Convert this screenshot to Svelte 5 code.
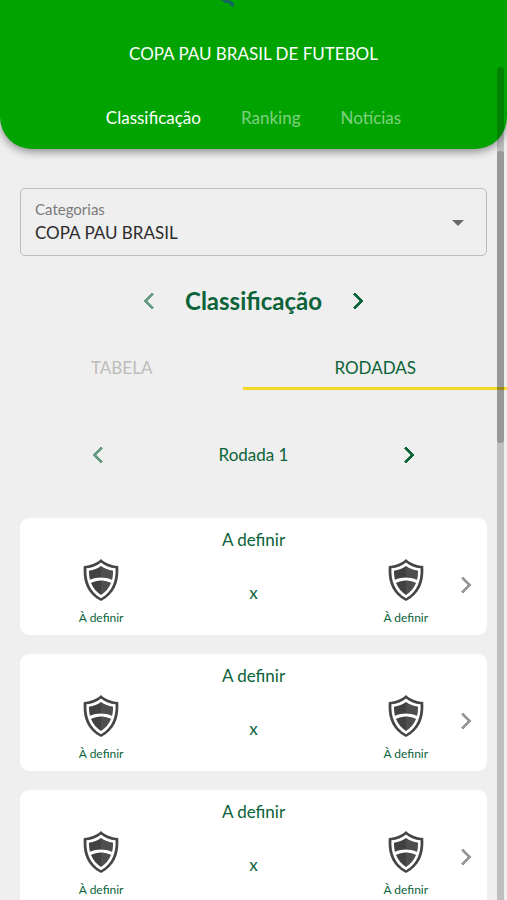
<script lang="ts">
  interface Match {
    title: string;
    home: string;
    away: string;
  }

  const sections = ['Classificação', 'Ranking', 'Notícias'];
  const views = ['TABELA', 'RODADAS'];
  const categories = ['COPA PAU BRASIL'];
  const matches: Match[] = [
    { title: 'A definir', home: 'À definir', away: 'À definir' },
    { title: 'A definir', home: 'À definir', away: 'À definir' },
    { title: 'A definir', home: 'À definir', away: 'À definir' },
  ];

  let section = $state('Classificação');
  let view = $state('RODADAS');
  let category = $state(categories[0]);
  let round = $state(1);
</script>

{#snippet chevron(dir: string)}
  <svg class="chevron" viewBox="0 0 24 24" aria-hidden="true">
    {#if dir === 'left'}
      <path d="M15.4 5.4 14 4l-8 8 8 8 1.4-1.4L8.8 12z" />
    {:else}
      <path d="M8.6 5.4 10 4l8 8-8 8-1.4-1.4 6.6-6.6z" />
    {/if}
  </svg>
{/snippet}

{#snippet team(name: string)}
  <div class="team">
    <svg class="shield" viewBox="0 0 36 42" aria-hidden="true">
      <path fill="#454545" d="M18 0C14 4 8 6.500 .8 7c-1 14 2 27 17.200 35C33 34 36.200 21 35.200 7 28 6.500 22 4 18 0z" />
      <path fill="#fff" d="M18 3.400C14 6.700 9 8.700 3.400 9.200 3 21 6 32 18 39.200 30 32 33 21 32.600 9.200 27 8.700 22 6.700 18 3.400z" />
      <path fill="#414141" d="M18 7C14.500 9.500 11 11 6 11.700c0 3.400.3 6.300 1 9C14 17.600 22 17.600 29 20.700c.7-2.700 1-5.600 1-9C25 11 21.500 9.500 18 7z" />
      <path fill="#414141" d="M8 24C14 20.600 22 20.600 28 24 26 29 22.600 32.800 18 36 13.400 32.800 10 29 8 24z" />
      <path fill="#686868" d="M18 7v11.400c3.700 0 7.500.8 11 2.300.7-2.700 1-5.600 1-9C25 11 21.500 9.500 18 7zM18 21.400V36c4.600-3.200 8-7 10-12-3-1.700-6.500-2.600-10-2.600z" opacity=".35" />
    </svg>
    <span>{name}</span>
  </div>
{/snippet}

<div class="page">
  <header>
    <svg class="logo" viewBox="0 0 20 8" aria-hidden="true">
      <path fill="#12645f" d="M1 0h9l5 3v4l-3-1-2-3H6L4 1z" />
    </svg>
    <h1>COPA PAU BRASIL DE FUTEBOL</h1>
    <nav>
      {#each sections as name}
        <button class:active={section === name} onclick={() => (section = name)}>{name}</button>
      {/each}
    </nav>
  </header>

  <main>
    <div class="field">
      <label for="category">Categorias</label>
      <select id="category" bind:value={category}>
        {#each categories as name}
          <option>{name}</option>
        {/each}
      </select>
      <svg class="arrow" viewBox="0 0 12 6" aria-hidden="true"><path d="M0 0h12L6 6z" /></svg>
    </div>

    <div class="phase">
      <button aria-label="Fase anterior" disabled>{@render chevron('left')}</button>
      <h2>Classificação</h2>
      <button aria-label="Próxima fase">{@render chevron('right')}</button>
    </div>

    <div class="views" role="tablist">
      {#each views as name}
        <button role="tab" aria-selected={view === name} class:active={view === name} onclick={() => (view = name)}>{name}</button>
      {/each}
    </div>

    <div class="round">
      <button aria-label="Rodada anterior" disabled={round === 1} onclick={() => round--}>{@render chevron('left')}</button>
      <span>Rodada {round}</span>
      <button aria-label="Próxima rodada" onclick={() => round++}>{@render chevron('right')}</button>
    </div>

    <div class="matches">
      {#each matches as match}
        <button class="match">
          <span class="title">{match.title}</span>
          {@render team(match.home)}
          <span class="versus">x</span>
          {@render team(match.away)}
          <span class="more">{@render chevron('right')}</span>
        </button>
      {/each}
    </div>
  </main>

  <div class="scrollbar"><div class="thumb"></div></div>
</div>

<style>
  :global(body) { background: #efefef; }
  .page {
    position: relative; height: 100vh; overflow: hidden;
    background: #efefef; color: #0b6339;
    font-family: Lato, "Liberation Sans", sans-serif;
    font-size: 17px; line-height: 26px;
  }
  button {
    border: 0; padding: 0; background: none;
    color: inherit; font: inherit; cursor: pointer;
  }
  h1, h2 { margin: 0; }

  header {
    display: flex; flex-direction: column; align-items: center;
    padding-bottom: 18px; background: #00a300; color: #fff;
    border-radius: 0 0 32px 32px;
    box-shadow: 0 3px 8px rgba(0,0,0,0.4);
  }
  .logo { width: 20px; height: 8px; margin-right: 50px; }
  h1 { margin-top: 33px; font-size: 17px; font-weight: 400; }
  nav { display: flex; gap: 40px; margin-top: 38px; }
  nav button { color: rgba(255,255,255,0.5); }
  nav button.active { color: #fff; }

  .field {
    position: relative; box-sizing: border-box; height: 68px;
    margin: 39px 20px 0; padding: 9px 0 0;
    border: 1px solid #bdbdbd; border-radius: 5px;
  }
  .field label {
    display: block; padding-left: 14px;
    color: #7b7b7b; font-size: 15px; line-height: 22px;
  }
  select {
    display: block; width: 100%; padding: 0 40px 0 14px; border: 0;
    appearance: none; background: none; color: #2b2b2b;
    font: inherit;
  }
  .arrow {
    position: absolute; top: 31px; right: 22px;
    width: 12px; height: 6px; fill: #696969; pointer-events: none;
  }

  .chevron { display: block; width: 24px; height: 24px; fill: currentColor; stroke: currentColor; stroke-width: 1; }
  button:disabled { opacity: 0.6; }

  .phase { display: flex; justify-content: center; align-items: center; gap: 23px; margin-top: 29px; }
  h2 { font-size: 24px; line-height: 32px; font-weight: 700; }

  .views { display: flex; margin-top: 30px; }
  .views button { flex: 1 1 auto; height: 43px; padding-top: 2px; border-bottom: 3px solid transparent; color: #bcbcbc; }
  .views button.active { border-color: #f5da25; color: #0b6339; }

  .round { display: flex; justify-content: space-between; align-items: center; margin: 52px 87px 0; }

  .matches { display: flex; flex-direction: column; gap: 19px; margin: 50px 20px 0; }
  .match {
    position: relative; display: grid; grid-template-columns: 1fr 1fr 1fr;
    justify-items: center; box-sizing: border-box; height: 117px; padding: 9px 5px 8px;
    background: #fff; border-radius: 9px;
  }
  .match .title { grid-column: 1 / -1; }
  .team {
    display: flex; flex-direction: column; align-items: center; gap: 8px;
    margin-top: 5px; font-size: 12px; line-height: 18px;
  }
  .shield { width: 36px; height: 42px; }
  .versus { margin-top: 26px; }
  .more { position: absolute; top: 55px; right: 10px; color: #999; }

  .scrollbar {
    position: absolute; top: 67px; right: 3px; bottom: 0; width: 7px;
    border-radius: 4px 4px 0 0; background: rgba(0,0,0,0.2);
  }
  .thumb { height: 35%; margin-top: 84px; border-radius: 3px; background: rgba(0,0,0,0.2); }
</style>
